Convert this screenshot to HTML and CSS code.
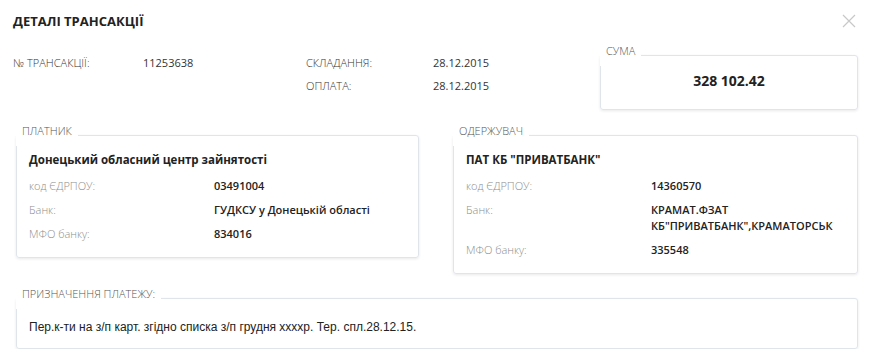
FILE: index.html
```html
<!DOCTYPE html>
<html lang="uk">
<head>
  <meta charset="UTF-8" />
  <title>Деталі трансакції</title>
  <link rel="stylesheet" href="styles.css">
</head>
<body>
  <div class="modal">
    <div class="modal-head">
      <h1>ДЕТАЛІ ТРАНСАКЦІЇ</h1>
      <span class="close" title="Закрити">
        <svg width="14" height="14" viewBox="0 0 14 14"><path d="M1 1L13 13M13 1L1 13" stroke="#c8c8c8" stroke-width="1.2" fill="none"/></svg>
      </span>
    </div>

    <div class="summary">
      <div class="meta">
        <div class="meta-label">№ ТРАНСАКЦІЇ:</div>
        <div class="meta-value">11253638</div>
        <div class="meta-label">СКЛАДАННЯ:</div>
        <div class="meta-value">28.12.2015</div>
        <div></div>
        <div></div>
        <div class="meta-label">ОПЛАТА:</div>
        <div class="meta-value">28.12.2015</div>
      </div>
      <fieldset class="panel sum">
        <legend>СУМА</legend>
        <div class="amount">328 102.42</div>
      </fieldset>
    </div>

    <div class="parties">
      <fieldset class="panel party">
        <legend>ПЛАТНИК</legend>
        <div class="party-name">Донецький обласний центр зайнятості</div>
        <div class="row"><span class="label">код ЄДРПОУ:</span><span class="value">03491004</span></div>
        <div class="row"><span class="label">Банк:</span><span class="value">ГУДКСУ у Донецькій області</span></div>
        <div class="row"><span class="label">МФО банку:</span><span class="value">834016</span></div>
      </fieldset>

      <fieldset class="panel party">
        <legend>ОДЕРЖУВАЧ</legend>
        <div class="party-name">ПАТ КБ "ПРИВАТБАНК"</div>
        <div class="row"><span class="label">код ЄДРПОУ:</span><span class="value">14360570</span></div>
        <div class="row"><span class="label">Банк:</span><span class="value">КРАМАТ.ФЗАТ<br>КБ"ПРИВАТБАНК",КРАМАТОРСЬК</span></div>
        <div class="row"><span class="label">МФО банку:</span><span class="value">335548</span></div>
      </fieldset>
    </div>

    <fieldset class="panel purpose">
      <legend>ПРИЗНАЧЕННЯ ПЛАТЕЖУ:</legend>
      <div class="purpose-text">Пер.к-ти на з/п карт. згідно списка з/п грудня ххххр. Тер. спл.28.12.15.</div>
    </fieldset>
  </div>
</body>
</html>
```

FILE: styles.css
```css
body {
  margin: 0;
  background: #fff;
  font-family: 'Open Sans', sans-serif;
  color: #222;
}
.modal {
  width: 869px;
  padding: 0 11px 0 13px;
  box-sizing: border-box;
}
.modal-head {
  display: flex;
  justify-content: space-between;
  align-items: center;
  padding-top: 12px;
  height: 18px;
  margin-bottom: 14px;
}
h1 {
  margin: 0;
  font-size: 13px;
  font-weight: 700;
  line-height: 18px;
  color: #222;
}
.close {
  display: flex;
  margin-right: 2px;
  cursor: pointer;
}

/* верхній блок */
.summary {
  display: flex;
  align-items: flex-start;
}
.meta {
  display: grid;
  grid-template-columns: 130px 163px 127px 167px;
  grid-auto-rows: 23px;
  align-items: center;
  margin-top: 7px;
  font-size: 11px;
  color: #333;
}
.meta-label { font-weight: 300; }
.meta-value { font-weight: 400; }

.panel {
  margin: 0;
  border: 1px solid #dfe5ea;
  border-radius: 3px;
  box-shadow: 0 1px 3px rgba(0, 0, 0, 0.09);
  padding: 0 12px;
  min-width: 0;
}
.panel legend {
  margin-left: -13px;
  padding: 0 6px 8px;
  font-size: 11px;
  line-height: 14px;
  font-weight: 300;
  color: #555;
  background: #fff;
}
.sum {
  width: 258px;
  box-sizing: border-box;
  height: 66px;
  padding-top: 0;
}
.amount {
  text-align: center;
  font-size: 14px;
  font-weight: 700;
  line-height: 20px;
  margin-top: 5px;
}

/* платник / одержувач */
.parties {
  display: flex;
  align-items: flex-start;
  gap: 34px;
  margin: 14px 0 0 3px;
}
.party {
  box-sizing: border-box;
  padding: 2px 12px 11px;
}
.party:first-child { width: 403px; }
.party:last-child { width: 405px; }
.party-name {
  font-size: 11.5px;
  font-weight: 700;
  line-height: 24px;
  margin-bottom: 2px;
}
.row {
  display: grid;
  grid-template-columns: 185px 1fr;
  padding: 4px 0;
  line-height: 16px;
  font-size: 11px;
}
.label {
  color: #8e8e8e;
  font-weight: 300;
}
.value {
  font-weight: 600;
  color: #222;
}

/* призначення */
.purpose {
  margin: 13px 0 0 3px;
  padding: 6px 12px 9px;
}
.purpose-text {
  font-family: 'Liberation Sans', Arial, sans-serif;
  font-size: 12px;
  line-height: 24px;
  color: #222;
}
```
